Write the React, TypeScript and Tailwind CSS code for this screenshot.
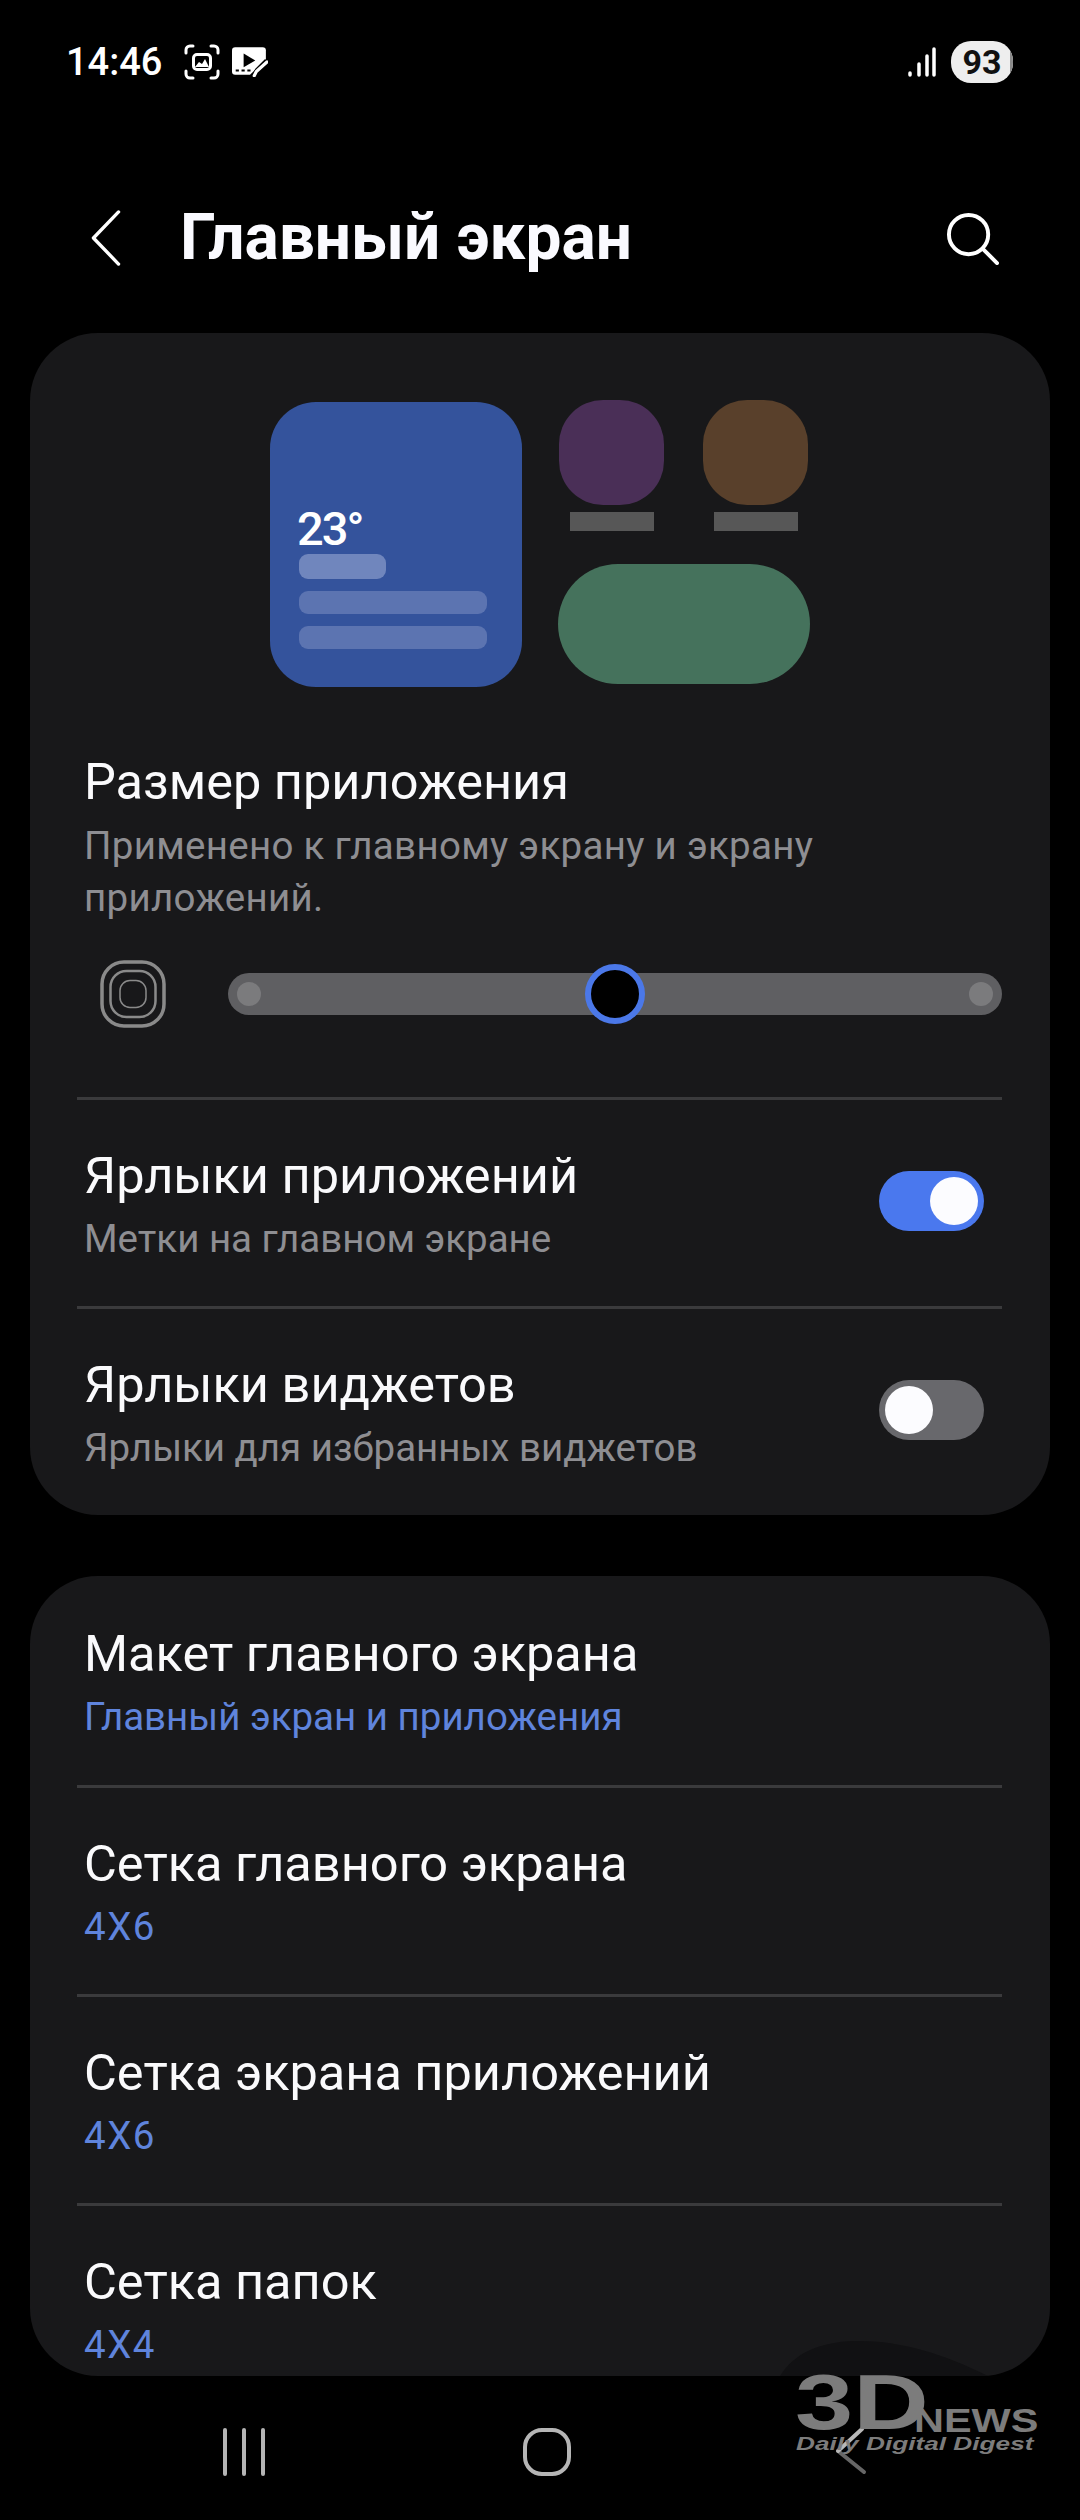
const sans = "font-['Roboto','Noto_Sans',sans-serif]";

function SettingRow({
  title,
  sub,
  subColor = "text-[#8e8e92]",
  toggle,
  first,
}: {
  title: string;
  sub: string;
  subColor?: string;
  toggle?: "on" | "off";
  first?: boolean;
}) {
  return (
    <div className={`flex items-center justify-between pl-[54px] pr-[66px] pt-[5px] ${first ? "h-[209px]" : "h-[206px]"}`}>
      <div className="flex flex-col gap-[7px]">
        <div className="text-[50.500px] leading-[60px] text-[#fafafc]">{title}</div>
        <div className={`text-[38.500px] leading-[52px] ${subColor}`}>{sub}</div>
      </div>
      {toggle === "on" && (
        <div className="mb-[9px] flex h-[60px] w-[105px] items-center justify-end rounded-full bg-[#4a78ee] pr-[6px]">
          <div className="h-[48px] w-[48px] rounded-full bg-[#fcfcff]" />
        </div>
      )}
      {toggle === "off" && (
        <div className="mb-[9px] flex h-[60px] w-[105px] items-center rounded-full bg-[#68686c] pl-[6px]">
          <div className="h-[48px] w-[48px] rounded-full bg-[#fcfcff]" />
        </div>
      )}
    </div>
  );
}

function Divider() {
  return <div className="ml-[47px] mr-[48px] h-[3px] shrink-0 bg-[#3a3a3c]" />;
}

function StatusBar() {
  return (
    <div className="flex h-[124px] shrink-0 items-center justify-between pl-[66px] pr-[67px]">
      <div className="flex items-center">
        <span className="text-[38px] font-medium leading-none text-white">14:46</span>
        <svg className="ml-[22px]" width="36" height="36" viewBox="0 0 36 36" fill="none" stroke="#fff" strokeWidth="3" strokeLinecap="round">
          <path d="M2 9V6a4 4 0 0 1 4-4h3M27 2h3a4 4 0 0 1 4 4v3M34 27v3a4 4 0 0 1-4 4h-3M9 34H6a4 4 0 0 1-4-4v-3" />
          <rect x="9.500" y="10.500" width="17" height="15" rx="3.500" />
          <path d="M11 23l4-5 3 2 3-5 4 8z" fill="#fff" stroke="none" />
        </svg>
        <svg className="ml-[12px]" width="36" height="30" viewBox="0 0 34 28">
          <path d="M3 0h26a3 3 0 0 1 3 3v9L17 26H3a3 3 0 0 1-3-3V3a3 3 0 0 1 3-3z" fill="#fff" />
          <path d="M11 6l11 6.500L11 19z" fill="#000" />
          <path d="M3.500 22h3M9 22h3M14.500 22h3" stroke="#000" strokeWidth="2" />
          <path d="M21 27l3-5 9-9" stroke="#000" strokeWidth="5" fill="none" />
          <path d="M21 27l2-4 10-9" stroke="#fff" strokeWidth="3" fill="none" strokeLinecap="round" />
        </svg>
      </div>
      <div className="flex items-center">
        <svg width="28" height="30" viewBox="0 0 28 30" stroke="#fff" strokeWidth="3.500" strokeLinecap="round">
          <path d="M2 28v-2M11 28V17M19 28V9M26 28V2" />
        </svg>
        <div className="relative ml-[15px] flex h-[42px] w-[62px] items-center justify-center overflow-hidden rounded-[20px] bg-[#eeeeee]">
          <span className="text-[34px] font-bold leading-none text-[#111]">93</span>
          <div className="absolute inset-y-0 right-0 w-[3px] bg-[#8a8a8a]" />
        </div>
      </div>
    </div>
  );
}

function Header() {
  return (
    <div className="flex h-[209px] shrink-0 items-center pt-[19px]">
      <svg className="ml-[90px]" width="32" height="56" viewBox="0 0 32 58" fill="none" stroke="#fff" strokeWidth="3.500" strokeLinecap="round" strokeLinejoin="round">
        <path d="M29 2L3 29l26 27" />
      </svg>
      <h1 className="ml-[58px] text-[64px] font-bold leading-none text-[#fafaff]">Главный экран</h1>
      <svg className="ml-auto mr-[81px]" width="53" height="53" viewBox="0 0 54 54" fill="none" stroke="#fff" strokeWidth="4" strokeLinecap="round">
        <circle cx="23" cy="23" r="20" />
        <path d="M38 38l14 14" />
      </svg>
    </div>
  );
}

function Preview() {
  return (
    <div className="flex h-[287px] gap-[36px] pl-[240px]">
      <div className="mt-[2px] flex h-[285px] w-[252px] flex-col rounded-[46px] bg-[#34539c] pl-[27px] pt-[105px]">
        <div className="text-[47px] font-medium leading-[44px] tracking-[-2px] text-white">23°</div>
        <div className="ml-[2px] mt-[3px] h-[25px] w-[87px] rounded-[9px] bg-[#7086bd]" />
        <div className="ml-[2px] mt-[12px] h-[23px] w-[188px] rounded-[9px] bg-[#5c74b1]" />
        <div className="ml-[2px] mt-[12px] h-[23px] w-[188px] rounded-[9px] bg-[#5c74b1]" />
      </div>
      <div className="flex w-[252px] flex-col">
        <div className="flex justify-between pl-[1px] pr-[2px]">
          <div className="flex flex-col items-center">
            <div className="h-[105px] w-[105px] rounded-[42%] bg-[#4a2f57]" />
            <div className="mt-[7px] h-[19px] w-[84px] bg-[#575757]" />
          </div>
          <div className="flex flex-col items-center">
            <div className="h-[105px] w-[105px] rounded-[42%] bg-[#59402b]" />
            <div className="mt-[7px] h-[19px] w-[84px] bg-[#575757]" />
          </div>
        </div>
        <div className="mt-[33px] h-[120px] w-[252px] rounded-[60px] bg-[#45725c]" />
      </div>
    </div>
  );
}

function SizeIcon() {
  return (
    <svg width="66" height="68" viewBox="0 0 66 68" fill="none" stroke="#8a8a8a">
      <rect x="2" y="2" width="62" height="64" rx="22" strokeWidth="3.500" />
      <rect x="10.500" y="11" width="45" height="46" rx="16" strokeWidth="2.500" />
      <rect x="20" y="20.500" width="26" height="27" rx="10" strokeWidth="1.500" />
    </svg>
  );
}

function SizeSlider() {
  return (
    <div className="mt-[36px] flex items-center pl-[70px] pr-[48px]">
      <SizeIcon />
      <div className="relative ml-[62px] flex h-[42px] flex-1 items-center justify-between rounded-full bg-[#5f5f62] px-[9px]">
        <div className="h-[24px] w-[24px] rounded-full bg-[#7b7b7d]" />
        <div className="h-[24px] w-[24px] rounded-full bg-[#7b7b7d]" />
        <div className="absolute left-[357px] top-[-9px] h-[60px] w-[60px] rounded-full border-[6px] border-[#4b78e8] bg-black" />
      </div>
    </div>
  );
}

function Watermark() {
  return (
    <div className="absolute left-[780px] top-[2335px] h-[130px] w-[270px] font-['Liberation_Sans',sans-serif] text-[#7c7c7c]">
      <svg className="absolute left-0 top-0" width="215" height="41" viewBox="0 0 215 41">
        <path d="M0 41C14 18 40 7 74 6c44-1 88 12 134 35z" fill="#111113" />
      </svg>
      <svg className="absolute left-[50px] top-[85px]" width="40" height="60" viewBox="0 0 40 60" fill="none" strokeWidth="4" strokeLinecap="round">
        <path d="M8 31l26 21" stroke="#666" />
        <path d="M8 31l24-22" stroke="#b8b8b8" />
      </svg>
      <span className="absolute left-[15px] top-[28px] origin-left scale-x-[1.34] text-[78px] font-bold leading-none">3D</span>
      <span className="absolute left-[134px] top-[68px] origin-left scale-x-[1.22] text-[34px] font-bold leading-none">NEWS</span>
      <span className="absolute left-[16px] top-[99px] origin-left scale-x-[1.38] whitespace-nowrap text-[19px] font-bold italic leading-none">Daily Digital Digest</span>
    </div>
  );
}

function NavBar() {
  return (
    <div className="flex flex-1 items-start pl-[223px] pt-[52px]">
      <svg width="42" height="48" viewBox="0 0 42 48" stroke="#b5b5b5" strokeWidth="4" strokeLinecap="round">
        <path d="M2 2v44M21 2v44M40 2v44" />
      </svg>
      <svg className="ml-[258px]" width="48" height="48" viewBox="0 0 48 48" fill="none" stroke="#b5b5b5" strokeWidth="4">
        <rect x="2" y="2" width="44" height="44" rx="17" />
      </svg>
    </div>
  );
}

export default function App() {
  return (
    <div className={`relative flex h-[2520px] w-[1080px] flex-col overflow-hidden bg-black ${sans}`}>
      <StatusBar />
      <Header />
      <main className="shrink-0 px-[30px]">
        <section className="h-[1182px] rounded-[68px] bg-[#18181a] pt-[67px]">
          <Preview />
          <div className="pl-[54px] pt-[65px]">
            <div className="text-[50.500px] leading-[60px] text-[#fafafc]">Размер приложения</div>
            <div className="mt-[8px] w-[820px] text-[38.500px] leading-[52px] tracking-[0.3px] text-[#8e8e92]">
              Применено к главному экрану и экрану приложений.
            </div>
          </div>
          <SizeSlider />
          <div className="mt-[69px]" />
          <Divider />
          <SettingRow title="Ярлыки приложений" sub="Метки на главном экране" toggle="on" />
          <Divider />
          <SettingRow title="Ярлыки виджетов" sub="Ярлыки для избранных виджетов" toggle="off" />
        </section>
        <section className="mt-[61px] h-[800px] overflow-hidden rounded-[68px] bg-[#18181a]">
          <SettingRow first title="Макет главного экрана" sub="Главный экран и приложения" subColor="text-[#5f84dc]" />
          <Divider />
          <SettingRow title="Сетка главного экрана" sub="4X6" subColor="tracking-[1.5px] text-[#5f84dc]" />
          <Divider />
          <SettingRow title="Сетка экрана приложений" sub="4X6" subColor="tracking-[1.5px] text-[#5f84dc]" />
          <Divider />
          <SettingRow title="Сетка папок" sub="4X4" subColor="tracking-[1.5px] text-[#5f84dc]" />
        </section>
      </main>
      <NavBar />
      <Watermark />
    </div>
  );
}
